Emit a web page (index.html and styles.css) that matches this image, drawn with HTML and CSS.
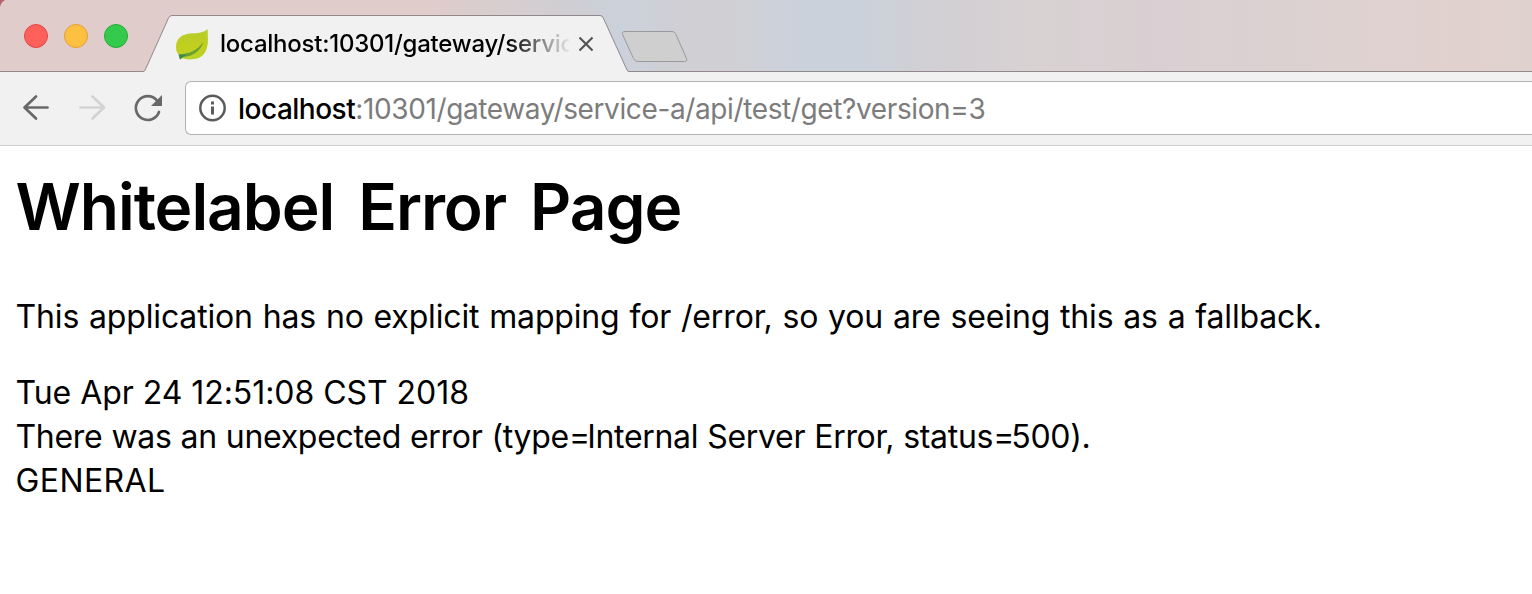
FILE: index.html
```html
<!DOCTYPE html>
<html lang="en">
<head>
<meta charset="utf-8">
<title>Whitelabel Error Page</title>
<link rel="stylesheet" href="styles.css">
</head>
<body>
<header class="tabstrip">
  <svg class="tab-shapes" width="1532" height="72" viewBox="0 0 1532 72" aria-hidden="true">
    <path d="M0 0H5Q1 2 0 7Z" fill="#b5626b"/>
    <path d="M0 71.500H143Q144.500 71.500 145.200 70L168.500 18Q169.700 15.500 172 15.500H600Q602.300 15.500 603.300 18L627 70Q627.700 71.500 629 71.500H1532V73H0Z" fill="#f1f1f1"/>
    <path d="M0 71.500H143Q144.500 71.500 145.200 70L168.500 18Q169.700 15.500 172 15.500H600Q602.300 15.500 603.300 18L627 70Q627.700 71.500 629 71.500H1532" fill="none" stroke="#766b6d" stroke-opacity=".75"/>
    <path d="M625 31.500H672Q674.500 31.500 675.500 33.500L686.500 58.500Q687.700 61.500 684.500 61.500H638Q635 61.500 633.500 58.500L622.500 34.500Q621.500 31.500 625 31.500Z" fill="#cfcfcf" stroke="#9a9a9c"/>
  </svg>
  <div class="lights"><i class="light red"></i><i class="light yellow"></i><i class="light green"></i></div>
  <div class="tab">
    <svg class="leaf" width="34" height="34" viewBox="0 0 34 34" aria-hidden="true">
      <defs><linearGradient id="leaf" x1="0" y1="0" x2="0" y2="1"><stop offset="0" stop-color="#b5cc2b"/><stop offset=".6" stop-color="#c2cf1d"/><stop offset="1" stop-color="#b9d32c"/></linearGradient></defs>
      <path d="M32.500 1C29 5 23 5 15 5.500C6 6.500 1 11 1 19C1 23 2 25 4 27L5 30C14 32.500 24 32 29 26C34 20 33 10 32.500 1Z" fill="url(#leaf)"/>
      <path d="M4 26.500C13 26 22 23 28.500 14C26 22.500 18 28.500 8 29L5 31.500Z" fill="#6a9f30"/>
      <path d="M3.500 26.500L12 26.500L8 29L5 31.500Z" fill="#3b8b50"/>
    </svg>
    <span class="tab-title">localhost:10301/gateway/servic</span>
    <svg class="close" width="16" height="16" viewBox="0 0 16 16" aria-hidden="true"><path d="M1.500 1.500L14.500 14.500M14.500 1.500L1.500 14.500" stroke="#555" stroke-width="2.200"/></svg>
  </div>
</header>
<nav class="toolbar">
  <svg class="nav-icons" width="185" height="73" viewBox="0 72 185 73" fill="none" stroke-width="2.700" stroke-linecap="round" stroke-linejoin="round" aria-hidden="true">
    <path d="M47.500 107.500H24.500M36 96.500L24.500 107.500L36 118.500" stroke="#686868"/>
    <path d="M80.500 107.500H103.500M92.500 96.500L104 107.500L92.500 118.500" stroke="#d3d3d3"/>
    <path d="M157 100.500A11.900 11.900 0 1 0 159 112" stroke="#686868"/>
    <path d="M162 95V106H151Z" fill="#686868"/>
  </svg>
  <div class="omnibox">
    <svg class="info" width="28" height="28" viewBox="0 0 28 28" aria-hidden="true"><circle cx="13.500" cy="14" r="12.200" fill="none" stroke="#5b5b5b" stroke-width="2.500"/><path d="M12 7.500H15V10.500H12ZM12 12.500H15V20.500H12Z" fill="#5b5b5b"/></svg>
    <span class="url"><b class="host">localhost</b><span class="path">:10301/gateway/service-a/api/test/get?version=3</span></span>
  </div>
</nav>
<main class="content">
  <h1 class="heading">Whitelabel Error Page</h1>
  <p class="message">This application has no explicit mapping for /error, so you are seeing this as a fallback.</p>
  <div class="line date">Tue Apr 24 12:51:08 CST 2018</div>
  <div class="line detail">There was an unexpected error (type<span class="eq">=</span>Internal Server Error, status<span class="eq">=</span>500).</div>
  <div class="line general">GENERAL</div>
</main>
</body>
</html>
```
FILE: styles.css
```css
* { box-sizing: border-box; }
body { margin: 0; width: 1532px; height: 594px; overflow: hidden; background: #fff; color: #000; font-family: Inter, "Liberation Sans", sans-serif; }
.tabstrip { position: relative; display: flex; height: 72px; background: linear-gradient(90deg, #e0cccb 0, #e0cccb 430px, #d7cecf 500px, #cfced3 570px, #cbd1db 620px, #cfcfd4 680px, #d0d0d4 740px, #cbd1db 790px, #cbd1da 870px, #d1cfd3 930px, #d8d2d3 1040px, #dacfd2 1170px, #ddd2d1 1320px, #e1d1ce 1460px, #dfd2ce 1532px); }
.tab-shapes { position: absolute; left: 0; top: 0; }
.lights { position: relative; display: flex; gap: 16px; width: 175px; padding: 24px 0 0 24px; }
.light { width: 24px; height: 24px; border-radius: 50%; border: 1px solid; }
.red { background: #fe605b; border-color: #e34742; }
.yellow { background: #fec041; border-color: #dfa033; }
.green { background: #34ca4b; border-color: #24ac37; }
.tab { position: relative; display: flex; padding-top: 28px; }
.leaf { flex: none; }
.tab-title { width: 349px; margin-left: 11px; height: 32px; line-height: 32px; font-size: 24px; font-weight: 450; letter-spacing: -0.24px; white-space: nowrap; -webkit-mask-image: linear-gradient(90deg, #000 287px, transparent 352px); mask-image: linear-gradient(90deg, #000 287px, transparent 352px); }
.close { flex: none; margin: 8px 0 0 9px; }
.toolbar { display: flex; height: 74px; background: #f1f1f1; border-bottom: 1px solid #d0d0d0; }
.nav-icons { flex: none; }
.omnibox { display: flex; align-items: center; flex: 1; height: 54px; margin-top: 9px; padding-left: 13px; border: 1px solid #b3b3b3; border-right: 0; border-radius: 6px 0 0 6px; background: #fff; }
.info { flex: none; }
.url { margin-left: 11px; padding-top: 2px; font-size: 28px; line-height: 40px; letter-spacing: -0.5px; white-space: nowrap; }
.host { font-weight: 450; }
.path { color: #7c7c7c; font-weight: 400; letter-spacing: -0.38px; }
.content { padding: 22px 0 0 15.5px; white-space: nowrap; }
.heading { margin: 0; font-size: 64px; line-height: 78px; font-weight: 600; letter-spacing: -1.03px; word-spacing: 8.8px; }
.message { margin: 49px 0 32px; font-size: 32px; line-height: 44px; letter-spacing: -0.15px; word-spacing: 1px; }
.line { font-size: 32px; line-height: 44px; }
.date { letter-spacing: -0.05px; }
.detail { letter-spacing: -0.3px; word-spacing: 0.3px; }
.eq { letter-spacing: -3px; }
.general { letter-spacing: 0.4px; }
```
